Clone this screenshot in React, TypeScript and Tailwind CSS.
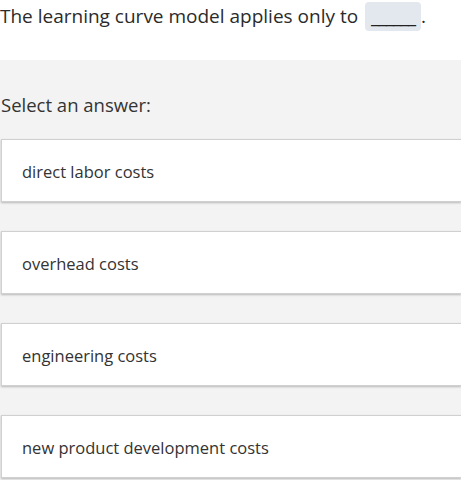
import React from "react";

const options = [
  "direct labor costs",
  "overhead costs",
  "engineering costs",
  "new product development costs",
];

export default function App() {
  return (
    <div
      className="w-[461px] h-[480px] overflow-hidden bg-white text-[#333]"
      style={{ fontFamily: '"Open Sans", "Noto Sans", sans-serif' }}
    >
      <div className="h-[60px] bg-white pt-[2px]">
        <p className="text-[19px] leading-[29px] text-[#2b2b2b] whitespace-nowrap">
          The learning curve model applies only to{" "}
          <span className="ml-[2px] inline-block h-[29px] w-[56px] rounded-[4px] bg-[#e3e8ee] text-center align-top text-[#222] tracking-[-1px]">
            ______
          </span>
          .
        </p>
      </div>
      <div className="bg-[#f3f3f3] h-[420px] pt-[31px]">
        <p className="text-[18.5px] leading-[28px] text-[#333] pl-[1px]">Select an answer:</p>
        <div className="mt-[20px] flex flex-col gap-[29px] pl-[1px]">
          {options.map((o) => (
            <div
              key={o}
              className="h-[63px] bg-white border border-[#d0d0d0] border-r-0 shadow-[0_1px_2px_rgba(0,0,0,0.25)] flex items-center pl-[20px] pt-[3px] text-[16.5px] text-[#333]"
            >
              {o}
            </div>
          ))}
        </div>
      </div>
    </div>
  );
}
